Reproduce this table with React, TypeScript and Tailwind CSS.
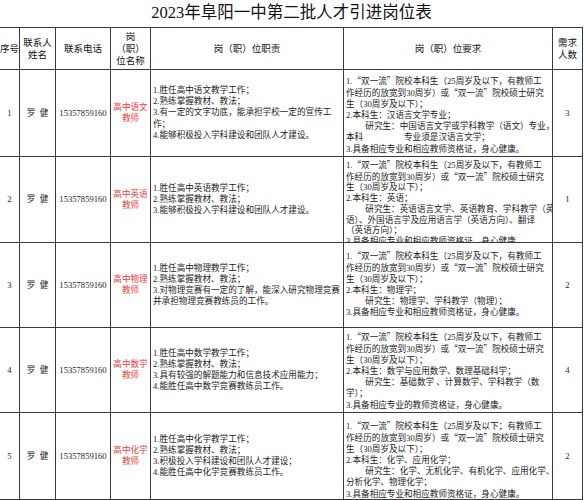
const cell = 'border-r border-b border-[#3a3a3a] flex items-center justify-center text-center overflow-hidden';

type Row = {
  n: string;
  job: string;
  duties: string[];
  req: string[];
  count: string;
  reqCls: string;
};

const REQ1 = [
  '1.“双一流”院校本科生（25周岁及以下，有教师工',
  '作经历的放宽到30周岁）或“双一流”院校硕士研究',
  '生（30周岁及以下）；',
];

const rows: Row[] = [
  {
    n: '1',
    job: '高中语文',
    duties: [
      '1.胜任高中语文教学工作；',
      '2.熟练掌握教材、教法；',
      '3.有一定的文字功底，能承担学校一定的宣传工',
      '作；',
      '4.能够积极投入学科建设和团队人才建设。',
    ],
    req: [
      ...REQ1,
      '2.本科生：汉语言文学专业；',
      '\u3000\u3000 研究生：中国语言文学或学科教学（语文）专业，',
      '本科\u3000\u3000\u3000\u3000   专业须是汉语言文学；',
      '3.具备相应专业和相应教师资格证，身心健康。',
    ],
    count: '3',
    reqCls: 'pt-[5px] leading-[11.1px]',
  },
  {
    n: '2',
    job: '高中英语',
    duties: ['1.胜任高中英语教学工作；', '2.熟练掌握教材、教法；', '3.能够积极投入学科建设和团队人才建设。'],
    req: [
      ...REQ1,
      '2.本科生：英语；',
      '\u3000\u3000 研究生：英语语言文学、英语教育、学科教学（英',
      '语）、外国语言学及应用语言学（英语方向）、翻译',
      '（英语方向）；',
      '3.具备相应专业和相应教师资格证，身心健康。',
    ],
    count: '1',
    // eight lines in a row made for seven: the last one runs into the border
    reqCls: 'pt-[2px] leading-[10.7px]',
  },
  {
    n: '3',
    job: '高中物理',
    duties: [
      '1.胜任高中物理教学工作；',
      '2.熟练掌握教材、教法；',
      '3.对物理竞赛有一定的了解，能深入研究物理竞赛',
      '并承担物理竞赛教练员的工作。',
    ],
    req: [
      ...REQ1,
      '2.本科生：物理学；',
      '\u3000\u3000 研究生：物理学、学科教学（物理）；',
      '3.具备相应专业和相应教师资格证，身心健康。',
    ],
    count: '2',
    reqCls: 'pt-[7px] leading-[11.1px]',
  },
  {
    n: '4',
    job: '高中数学',
    duties: [
      '1.胜任高中数学教学工作；',
      '2.熟练掌握教材、教法；',
      '3.具有较强的解题能力和信息技术应用能力；',
      '4.能胜任高中数学竞赛教练员工作。',
    ],
    req: [
      ...REQ1,
      '2.本科生：数学与应用数学、数理基础科学；',
      '\u3000\u3000 研究生：基础数学 、计算数学、学科教学（数',
      '学）；',
      '3.具备相应专业的教师资格证，身心健康。',
    ],
    count: '4',
    reqCls: 'pt-[3px] leading-[11.1px]',
  },
  {
    n: '5',
    job: '高中化学',
    duties: [
      '1.胜任高中化学教学工作；',
      '2.熟练掌握教材、教法；',
      '3.积极投入学科建设和团队人才建设；',
      '4.能胜任高中化学竞赛教练员工作。',
    ],
    req: [
      '1.“双一流”院校本科生（25周岁及以下；有教师工',
      '作经历的放宽到30周岁）或“双一流”院校硕士研究',
      '生（30周岁及以下）；',
      '2.本科生：化学、应用化学；',
      '\u3000\u3000 研究生：化学、无机化学、有机化学、应用化学、',
      '分析化学、物理化学；',
      '3.具备相应专业和相应教师资格证，身心健康。',
    ],
    count: '2',
    reqCls: 'pt-[7px] leading-[11.1px]',
  },
];

// curly quotes come out narrow in Liberation Serif, the sheet has them full width
function Line({ s }: { s: string }) {
  const parts = s.split(/([“”])/);
  return (
    <div className="whitespace-pre shrink-0">
      {parts.map((p, i) =>
        p === '“' || p === '”' ? (
          <span key={i} className="font-['Noto_Sans_CJK_SC',sans-serif]">
            {p}
          </span>
        ) : (
          <span key={i}>{p}</span>
        ),
      )}
    </div>
  );
}

export default function App() {
  return (
    <div className="w-[584px] h-[500px] bg-white overflow-hidden text-[#1c1c1c] font-['Liberation_Serif','Noto_Sans_CJK_SC',serif]">
      <div className="grid grid-cols-[20px_36px_55px_40px_193px_209px_30px] grid-rows-[28px_42px_87px_86px_85px_85px_87px]">
        <div className="col-span-7 border-b border-[#3a3a3a] flex items-center justify-center text-[16.5px] leading-none text-[#111]">
          2023年阜阳一中第二批人才引进岗位表
        </div>

        <div className={`${cell} text-[9.5px] leading-[12px] text-[#111]`}>序号</div>
        <div className={`${cell} text-[9.5px] leading-[12px] text-[#111]`}>
          联系人
          <br />
          姓名
        </div>
        <div className={`${cell} text-[9.5px] leading-[12px] text-[#111]`}>联系电话</div>
        <div className={`${cell} text-[9.5px] leading-[12px] text-[#111]`}>
          岗
          <br />
          （职）
          <br />
          位名称
        </div>
        <div className={`${cell} text-[9.5px] leading-[12px] text-[#111]`}>岗（职）位职责</div>
        <div className={`${cell} text-[9.5px] leading-[12px] text-[#111]`}>岗（职）位要求</div>
        <div className={`${cell} text-[9.5px] leading-[12px] text-[#111]`}>
          需求
          <br />
          人数
        </div>

        {rows.map((r) => (
          <div key={r.n} className="contents">
            <div className={`${cell} text-[8.6px]`}>{r.n}</div>
            <div className={`${cell} text-[8.6px] whitespace-pre`}>罗  健</div>
            <div className={`${cell} text-[8.6px]`}>15357859160</div>
            <div className={`${cell} text-[8.6px] leading-[11px] text-[#f03a3a]`}>
              {r.job}
              <br />
              教师
            </div>
            <div className="border-r border-b border-[#3a3a3a] flex flex-col justify-center pl-[2px] overflow-hidden text-[8.6px] leading-[11.1px]">
              {r.duties.map((d, i) => (
                <Line key={i} s={d} />
              ))}
            </div>
            <div
              className={`border-r border-b border-[#3a3a3a] flex flex-col justify-start pl-[2px] overflow-hidden text-[8.6px] ${r.reqCls}`}
            >
              {r.req.map((d, i) => (
                <Line key={i} s={d} />
              ))}
            </div>
            <div className={`${cell} text-[8.6px]`}>{r.count}</div>
          </div>
        ))}
      </div>
    </div>
  );
}
